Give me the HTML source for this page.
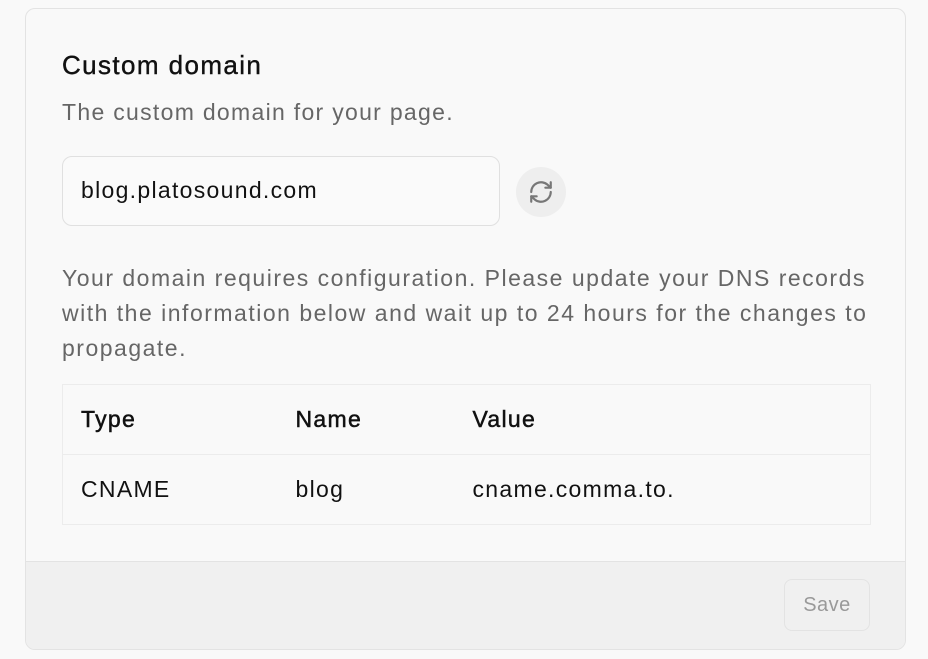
<!DOCTYPE html>
<html><head><style>
*{box-sizing:border-box;margin:0;padding:0}
body{width:928px;height:659px;background:#f9f9f9;font-family:"Liberation Sans",sans-serif;position:relative;overflow:hidden;letter-spacing:1.3px}
.card{position:absolute;left:25px;top:8px;width:881px;height:642px;border:1px solid #e3e3e3;border-radius:10px;background:#f9f9f9;overflow:hidden}
.t{position:absolute;left:36px;top:41px;font-size:26px;color:#111;letter-spacing:1.4px;-webkit-text-stroke:0.4px #111}
.d{position:absolute;left:36px;top:90px;font-size:23px;color:#666}
.in{position:absolute;left:36px;top:147px;width:438px;height:70px;border:1px solid #e0e0e0;border-radius:10px;background:#fafafa;font-size:23px;color:#111;padding:20px 18px}
.rb{position:absolute;left:490px;top:158px;width:50px;height:50px;border-radius:50%;background:#eeeeee}
.rb svg{position:absolute;left:12px;top:12px}
.p{position:absolute;left:36px;top:252px;width:830px;font-size:23px;line-height:35px;color:#666;letter-spacing:1.5px}
table{position:absolute;left:36px;top:375px;width:809px;border-collapse:collapse;font-size:23px;color:#111;border-left:1px solid #ececec;border-right:1px solid #ececec}
td{border:1px solid #ececec;border-left:none;border-right:none;height:70px;padding-left:18px}
tr.h td{-webkit-text-stroke:0.5px #111}
.f{position:absolute;left:0;top:552px;width:100%;height:90px;background:#f0f0f0;border-top:1px solid #e3e3e3}
.s{position:absolute;right:35px;top:17px;width:86px;height:52px;border:1px solid #e3e3e3;border-radius:8px;font-size:20px;color:#999;text-align:center;line-height:50px;letter-spacing:0.5px}
</style></head><body>
<div class="card">
<div class="t">Custom domain</div>
<div class="d">The custom domain for your page.</div>
<div class="in">blog.platosound.com</div>
<div class="rb"><svg width="26" height="26" viewBox="0 0 24 24" fill="none" stroke="#777" stroke-width="2" stroke-linecap="round" stroke-linejoin="round"><path d="M3 12a9 9 0 0 1 15-6.7L21 8"/><path d="M21 3v5h-5"/><path d="M21 12a9 9 0 0 1-15 6.7L3 16"/><path d="M8 16H3v5"/></svg></div>
<div class="p">Your domain requires configuration. Please update your DNS records<br>with the information below and wait up to 24 hours for the changes to<br>propagate.</div>
<table><tr class="h"><td style="width:215px">Type</td><td style="width:177px">Name</td><td>Value</td></tr>
<tr><td>CNAME</td><td>blog</td><td>cname.comma.to.</td></tr></table>
<div class="f"><div class="s">Save</div></div>
</div>
</body></html>
